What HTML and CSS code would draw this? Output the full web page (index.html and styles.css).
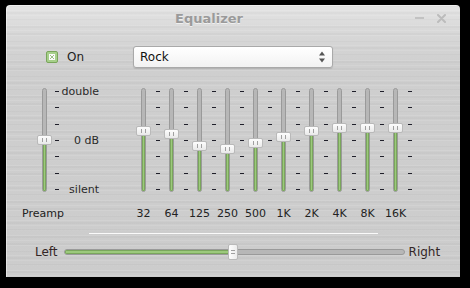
FILE: index.html
```html
<!DOCTYPE html>
<html lang="en">
<head>
  <meta charset="UTF-8">
  <title>Equalizer</title>
  <link rel="stylesheet" href="styles.css">
</head>
<body>
  <div class="window">
    <div class="titlebar">
      <span class="title">Equalizer</span>
      <div class="wm-buttons">
        <span class="wm-min"></span>
        <svg class="wm-close" width="9" height="9" viewBox="0 0 9 9">
          <path d="M1 1 L8 8 M8 1 L1 8" stroke="#bcbcbc" stroke-width="2" stroke-linecap="round"/>
        </svg>
      </div>
    </div>

    <div class="top-row">
      <label class="toggle">
        <svg class="check" width="12" height="12" viewBox="0 0 12 12">
          <rect x="0.5" y="0.5" width="11" height="11" rx="1.5" fill="#a6cf8a" stroke="#79a55b"/>
          <rect x="3" y="3" width="6" height="6" fill="#fafafa"/>
          <path d="M4 4 L8 8 M8 4 L4 8" stroke="#9bbf85" stroke-width="1"/>
        </svg>
        <span>On</span>
      </label>
      <div class="combo">
        <span>Rock</span>
        <svg class="combo-arrows" width="6" height="12" viewBox="0 0 6 12">
          <path d="M3 0.5 L6 4.5 L0 4.5 Z" fill="#555"/>
          <path d="M0 7.5 L6 7.5 L3 11.5 Z" fill="#555"/>
        </svg>
      </div>
    </div>

    <div class="eq">
      <div class="preamp">
        <div class="slider" style="--y: 52">
          <div class="trough"><div class="fill"></div></div>
          <div class="thumb"></div>
        </div>
        <div class="scale preamp-scale">
          <div class="mark"><i></i><span>double</span></div>
          <div class="mark"><i></i></div>
          <div class="mark"><i></i></div>
          <div class="mark"><i></i><span>0 dB</span></div>
          <div class="mark"><i></i></div>
          <div class="mark"><i></i></div>
          <div class="mark"><i></i><span>silent</span></div>
        </div>
      </div>

      <div class="bands">
        <div class="band">
          <div class="slider" style="--y: 43"><div class="trough"><div class="fill"></div></div><div class="thumb"></div></div>
          <div class="scale"><div class="mark"><i></i></div><div class="mark"><i></i></div><div class="mark"><i></i></div><div class="mark"><i></i></div><div class="mark"><i></i></div><div class="mark"><i></i></div><div class="mark"><i></i></div></div>
        </div>
        <div class="band">
          <div class="slider" style="--y: 46"><div class="trough"><div class="fill"></div></div><div class="thumb"></div></div>
          <div class="scale"><div class="mark"><i></i></div><div class="mark"><i></i></div><div class="mark"><i></i></div><div class="mark"><i></i></div><div class="mark"><i></i></div><div class="mark"><i></i></div><div class="mark"><i></i></div></div>
        </div>
        <div class="band">
          <div class="slider" style="--y: 58"><div class="trough"><div class="fill"></div></div><div class="thumb"></div></div>
          <div class="scale"><div class="mark"><i></i></div><div class="mark"><i></i></div><div class="mark"><i></i></div><div class="mark"><i></i></div><div class="mark"><i></i></div><div class="mark"><i></i></div><div class="mark"><i></i></div></div>
        </div>
        <div class="band">
          <div class="slider" style="--y: 61"><div class="trough"><div class="fill"></div></div><div class="thumb"></div></div>
          <div class="scale"><div class="mark"><i></i></div><div class="mark"><i></i></div><div class="mark"><i></i></div><div class="mark"><i></i></div><div class="mark"><i></i></div><div class="mark"><i></i></div><div class="mark"><i></i></div></div>
        </div>
        <div class="band">
          <div class="slider" style="--y: 55"><div class="trough"><div class="fill"></div></div><div class="thumb"></div></div>
          <div class="scale"><div class="mark"><i></i></div><div class="mark"><i></i></div><div class="mark"><i></i></div><div class="mark"><i></i></div><div class="mark"><i></i></div><div class="mark"><i></i></div><div class="mark"><i></i></div></div>
        </div>
        <div class="band">
          <div class="slider" style="--y: 49"><div class="trough"><div class="fill"></div></div><div class="thumb"></div></div>
          <div class="scale"><div class="mark"><i></i></div><div class="mark"><i></i></div><div class="mark"><i></i></div><div class="mark"><i></i></div><div class="mark"><i></i></div><div class="mark"><i></i></div><div class="mark"><i></i></div></div>
        </div>
        <div class="band">
          <div class="slider" style="--y: 43"><div class="trough"><div class="fill"></div></div><div class="thumb"></div></div>
          <div class="scale"><div class="mark"><i></i></div><div class="mark"><i></i></div><div class="mark"><i></i></div><div class="mark"><i></i></div><div class="mark"><i></i></div><div class="mark"><i></i></div><div class="mark"><i></i></div></div>
        </div>
        <div class="band">
          <div class="slider" style="--y: 40"><div class="trough"><div class="fill"></div></div><div class="thumb"></div></div>
          <div class="scale"><div class="mark"><i></i></div><div class="mark"><i></i></div><div class="mark"><i></i></div><div class="mark"><i></i></div><div class="mark"><i></i></div><div class="mark"><i></i></div><div class="mark"><i></i></div></div>
        </div>
        <div class="band">
          <div class="slider" style="--y: 40"><div class="trough"><div class="fill"></div></div><div class="thumb"></div></div>
          <div class="scale"><div class="mark"><i></i></div><div class="mark"><i></i></div><div class="mark"><i></i></div><div class="mark"><i></i></div><div class="mark"><i></i></div><div class="mark"><i></i></div><div class="mark"><i></i></div></div>
        </div>
        <div class="band">
          <div class="slider" style="--y: 40"><div class="trough"><div class="fill"></div></div><div class="thumb"></div></div>
          <div class="scale"><div class="mark"><i></i></div><div class="mark"><i></i></div><div class="mark"><i></i></div><div class="mark"><i></i></div><div class="mark"><i></i></div><div class="mark"><i></i></div><div class="mark"><i></i></div></div>
        </div>
      </div>
    </div>

    <div class="labels">
      <span class="preamp-label">Preamp</span>
      <span class="freq">32</span>
      <span class="freq">64</span>
      <span class="freq">125</span>
      <span class="freq">250</span>
      <span class="freq">500</span>
      <span class="freq">1K</span>
      <span class="freq">2K</span>
      <span class="freq">4K</span>
      <span class="freq">8K</span>
      <span class="freq">16K</span>
    </div>

    <div class="separator"></div>

    <div class="balance">
      <span>Left</span>
      <div class="hslider" style="--x: 48.7%">
        <div class="htrough"><div class="hfill"></div></div>
        <div class="hthumb"></div>
      </div>
      <span>Right</span>
    </div>
  </div>
</body>
</html>
```

FILE: styles.css
```css
body {
  margin: 0;
  width: 470px;
  height: 288px;
  background-color: #000;
  font-family: "DejaVu Sans", sans-serif;
  color: #2a2a2a;
  overflow: hidden;
}
/* brushed metal: two stripe sets with different periods so it doesn't look ruled */
.window {
  margin: 5px 0 0 6px;
  width: 454px;
  height: 272px;
  border-radius: 4px 4px 0 0;
  background:
    repeating-linear-gradient(180deg, rgba(255,255,255,0.10) 0 1px, rgba(255,255,255,0) 1px 5px),
    repeating-linear-gradient(180deg, rgba(0,0,0,0.025) 0 2px, rgba(0,0,0,0) 2px 7px),
    linear-gradient(#e4e4e4 0, #d9d9d9 24px, #cfcfcf 60px, #cccccc 100%);
  box-shadow: inset 1px 1px 0 rgba(255,255,255,0.45);
}
.titlebar {
  height: 26px;
  display: flex;
  align-items: center;
}
.title {
  margin-left: 169px;
  font-size: 13px;
  font-weight: bold;
  color: #9a9a9a;
  text-shadow: 0 1px 0 rgba(255,255,255,0.6);
}
.wm-buttons {
  margin-left: auto;
  margin-right: 14px;
  display: flex;
  align-items: center;
  gap: 13px;
}
.wm-min {
  width: 9px;
  height: 2px;
  background-color: #c2c2c2;
}
.top-row {
  margin-top: 15px;
  height: 22px;
  display: flex;
  align-items: center;
  padding-left: 40px;
}
.toggle {
  display: flex;
  align-items: center;
  width: 87px;
  font-size: 12px;
  color: #222;
}
.toggle span {
  margin-left: 9px;
}
.combo {
  width: 200px;
  height: 22px;
  box-sizing: border-box;
  display: flex;
  align-items: center;
  padding: 0 7px 0 6px;
  background: linear-gradient(#ffffff, #f2f2f2);
  border: 1px solid #a9a9a9;
  border-radius: 3px;
  box-shadow: 0 1px 1px rgba(0,0,0,0.12);
  font-size: 12px;
  color: #111;
}
.combo-arrows {
  margin-left: auto;
}
.eq {
  margin-top: 20px;
  height: 104px;
  display: flex;
  padding-left: 30px;
}
.preamp {
  display: flex;
}
.slider {
  position: relative;
  width: 17px;
  height: 104px;
  display: flex;
  justify-content: center;
}
.trough {
  position: relative;
  width: 5px;
  height: 100%;
  box-sizing: border-box;
  background-color: #b7b7b7;
  border: 1px solid #9a9a9a;
  border-radius: 3px;
  overflow: hidden;
}
.fill {
  position: absolute;
  left: 0;
  right: 0;
  bottom: 0;
  height: calc(104px - var(--y) * 1px);
  background-color: #9cc97c;
  box-shadow: inset 0 0 0 1px #7aa65c;
}
.thumb {
  position: absolute;
  left: 1px;
  top: calc(var(--y) * 1px - 5px);
  width: 15px;
  height: 10px;
  box-sizing: border-box;
  background: linear-gradient(#fdfdfd, #e9e9e9);
  border: 1px solid #b9b9b9;
  border-radius: 2px;
  display: flex;
  justify-content: center;
  align-items: center;
}
.thumb::before {
  content: "";
  width: 3px;
  height: 4px;
  border-left: 1px solid #a0a0a0;
  border-right: 1px solid #a0a0a0;
}
.scale {
  height: 104px;
  box-sizing: border-box;
  padding: 3px 0 2px;
  display: flex;
  flex-direction: column;
  justify-content: space-between;
}
.mark {
  height: 1px;
  display: flex;
  align-items: center;
}
.mark i {
  width: 4px;
  height: 1px;
  background-color: #1f1f2a;
}
.preamp-scale {
  margin-left: 2px;
  width: 44px;
}
.preamp-scale span {
  flex: 1;
  text-align: right;
  font-size: 11px;
  color: #2a2a2a;
}
.bands {
  margin-left: 36px;
  display: flex;
}
.band {
  width: 28px;
  display: flex;
}
.band .scale {
  margin-left: 4px;
}
.labels {
  margin-top: 14px;
  height: 14px;
  display: flex;
  align-items: center;
  padding-left: 16px;
  font-size: 11px;
  color: #222;
}
.preamp-label {
  width: 113px;
}
.freq {
  width: 17px;
  margin-right: 11px;
  display: flex;
  justify-content: center;
  white-space: nowrap;
}
.separator {
  margin: 13px 0 0 83px;
  width: 289px;
  height: 1px;
  background-color: #fafafa;
}
.balance {
  margin-top: 9px;
  height: 18px;
  display: flex;
  align-items: center;
  padding-left: 29px;
  font-size: 12px;
  color: #332626;
}
.hslider {
  position: relative;
  width: 341px;
  height: 16px;
  margin: 0 4px 0 6px;
  display: flex;
  align-items: center;
}
.htrough {
  position: relative;
  width: 100%;
  height: 6px;
  box-sizing: border-box;
  background-color: #b7b7b7;
  border: 1px solid #9a9a9a;
  border-radius: 3px;
  overflow: hidden;
}
.hfill {
  position: absolute;
  left: 0;
  top: 0;
  bottom: 0;
  width: var(--x);
  background-color: #9cc97c;
  box-shadow: inset 0 0 0 1px #7aa65c;
}
.hthumb {
  position: absolute;
  left: calc(var(--x) - 2px);
  top: 0;
  width: 10px;
  height: 16px;
  box-sizing: border-box;
  background: linear-gradient(90deg, #fdfdfd, #ececec);
  border: 1px solid #b9b9b9;
  border-radius: 2px;
  display: flex;
  justify-content: center;
  align-items: center;
}
.hthumb::before {
  content: "";
  width: 4px;
  height: 2px;
  border-top: 1px solid #a0a0a0;
  border-bottom: 1px solid #a0a0a0;
}
```
